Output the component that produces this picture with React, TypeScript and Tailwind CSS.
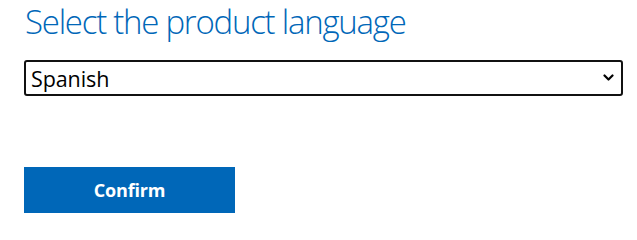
import React from "react";

export default function App() {
  return (
    <div className="w-[637px] h-[226px] bg-white pl-[24px]">
      <h2 className="text-[33px] leading-[44px] font-light text-[#0067b8] font-['Open_Sans',sans-serif] tracking-[-1.25px] pl-[1px]">
        Select the product language
      </h2>
      <div className="relative mt-[16px] w-[599px] h-[36px]">
        <select
          defaultValue="es"
          className="appearance-none w-full h-full border-2 border-[#111] rounded-[3px] pl-[5px] pt-[1px] text-[21.5px] leading-[28px] text-black font-['Open_Sans',sans-serif] tracking-[-0.1px] bg-white outline-none"
        >
          <option value="es">Spanish</option>
        </select>
        <svg className="absolute right-[9px] top-[14px] pointer-events-none" width="11" height="8" viewBox="0 0 11 8">
          <path d="M1.5 1.5 L5.5 5.5 L9.5 1.5" fill="none" stroke="#000" strokeWidth="2.2" strokeLinecap="round" strokeLinejoin="round" />
        </svg>
      </div>
      <button className="mt-[71px] w-[211px] h-[46px] bg-[#0067b8] text-white text-[18px] font-bold font-['Open_Sans',sans-serif] tracking-[-0.2px] block">
        Confirm
      </button>
    </div>
  );
}
